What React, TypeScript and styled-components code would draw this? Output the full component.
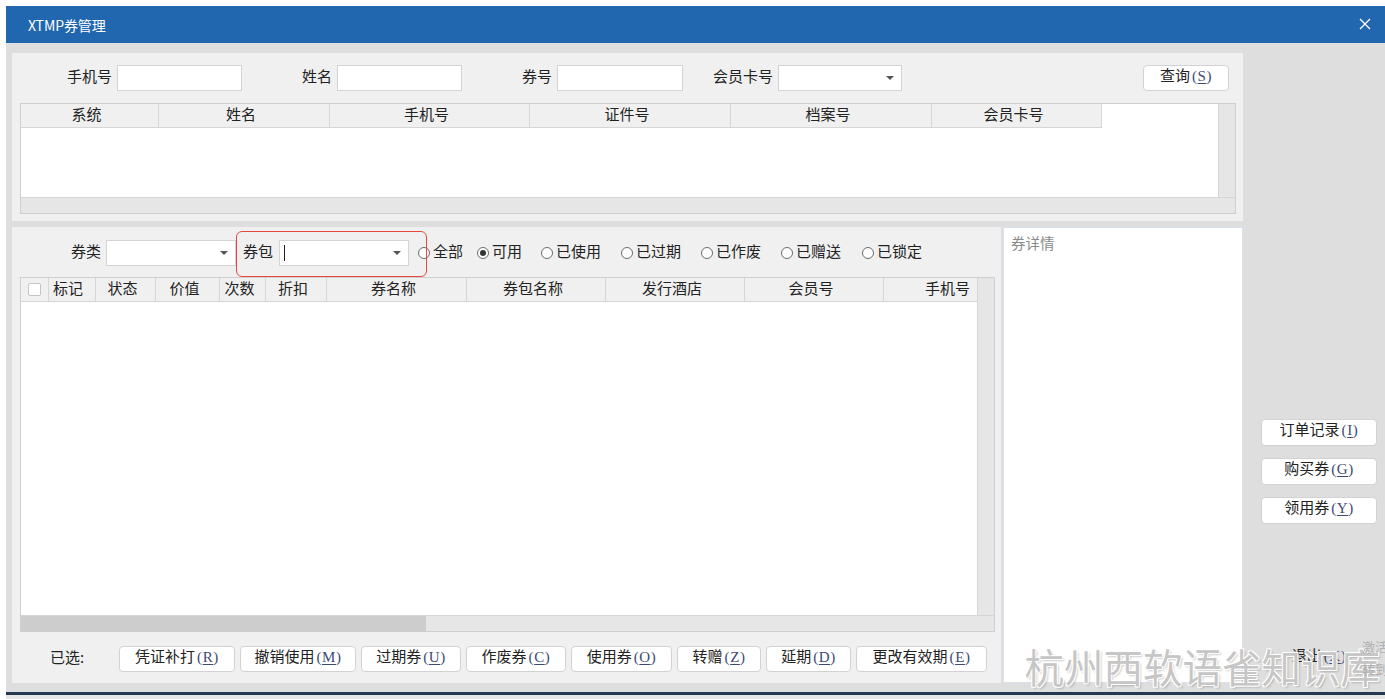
import React from 'react';
import styled, { createGlobalStyle } from 'styled-components';

const GlobalStyle = createGlobalStyle`
  html, body {
    margin: 0;
    padding: 0;
    background: #ffffff;
    overflow: hidden;
  }
  body {
    font-family: "Noto Sans CJK SC", "Microsoft YaHei", sans-serif;
    font-size: 15px;
    color: #222;
  }
  * {
    box-sizing: border-box;
  }
`;

type Column = { title: string; width: number; align?: 'left' | 'center' | 'right' };

const topColumns: Column[] = [
  { title: '系统', width: 138 },
  { title: '姓名', width: 171 },
  { title: '手机号', width: 200 },
  { title: '证件号', width: 201 },
  { title: '档案号', width: 201 },
  { title: '会员卡号', width: 170 },
];

const couponColumns: Column[] = [
  { title: '标记', width: 47, align: 'left' },
  { title: '状态', width: 60 },
  { title: '价值', width: 64 },
  { title: '次数', width: 46 },
  { title: '折扣', width: 61 },
  { title: '券名称', width: 140 },
  { title: '券包名称', width: 139 },
  { title: '发行酒店', width: 139 },
  { title: '会员号', width: 139 },
  { title: '手机号', width: 94, align: 'right' },
];

const statuses = [
  { label: '全部', width: 59 },
  { label: '可用', width: 64, checked: true },
  { label: '已使用', width: 80 },
  { label: '已过期', width: 80 },
  { label: '已作废', width: 80 },
  { label: '已赠送', width: 81 },
  { label: '已锁定', width: 70 },
];

const actions = [
  { text: '凭证补打', key: 'R', width: 116 },
  { text: '撤销使用', key: 'M', width: 116 },
  { text: '过期券', key: 'U', width: 100 },
  { text: '作废券', key: 'C', width: 100 },
  { text: '使用券', key: 'O', width: 101 },
  { text: '转赠', key: 'Z', width: 84 },
  { text: '延期', key: 'D', width: 85 },
  { text: '更改有效期', key: 'E', width: 131 },
];

const sideActions = [
  { text: '订单记录', key: 'I' },
  { text: '购买券', key: 'G' },
  { text: '领用券', key: 'Y' },
];

function Caption({ text, hotkey }: { text: string; hotkey: string }) {
  return (
    <CaptionText>
      {text}
      <Hotkey>
        (<u>{hotkey}</u>)
      </Hotkey>
    </CaptionText>
  );
}

function Select({ width, caret }: { width: number; caret?: boolean }) {
  return (
    <SelectBox $width={width}>
      {caret ? <Caret /> : null}
      <Arrow />
    </SelectBox>
  );
}

export default function App() {
  return (
    <Page>
      <GlobalStyle />
      <Window>
        <TitleBar>
          <Title>XTMP券管理</Title>
          <CloseIcon viewBox="0 0 12 12">
            <path d="M1 1 L11 11 M11 1 L1 11" />
          </CloseIcon>
        </TitleBar>

        <Body>
          <MainCol>
            <SearchPanel>
              <SearchRow>
                <Field $width={222}>
                  <FieldLabel>手机号</FieldLabel>
                  <TextInput $width={125} />
                </Field>
                <Field $width={220}>
                  <FieldLabel>姓名</FieldLabel>
                  <TextInput $width={125} />
                </Field>
                <Field $width={221}>
                  <FieldLabel>券号</FieldLabel>
                  <TextInput $width={126} />
                </Field>
                <Field $width={219}>
                  <FieldLabel>会员卡号</FieldLabel>
                  <Select width={124} />
                </Field>
                <QueryButton>
                  <Caption text="查询" hotkey="S" />
                </QueryButton>
              </SearchRow>

              <Grid>
                <GridView>
                  <HeaderRow>
                    {topColumns.map((c) => (
                      <HeaderCell key={c.title} $width={c.width}>
                        {c.title}
                      </HeaderCell>
                    ))}
                  </HeaderRow>
                </GridView>
                <VScroll />
                <HScroll />
              </Grid>
            </SearchPanel>

            <LowerRow>
              <CouponPanel>
                <FilterRow>
                  <Field $width={216}>
                    <FieldLabel>券类</FieldLabel>
                    <Select width={130} />
                  </Field>
                  <MarkedField>
                    <FieldLabel>券包</FieldLabel>
                    <Select width={130} caret />
                    <Highlight />
                  </MarkedField>
                  {statuses.map((s) => (
                    <RadioItem key={s.label} $width={s.width}>
                      <RadioDot $checked={!!s.checked} />
                      <RadioText>{s.label}</RadioText>
                    </RadioItem>
                  ))}
                </FilterRow>

                <Grid>
                  <GridView>
                    <HeaderRow $fill>
                      <CheckCell>
                        <CheckBox />
                      </CheckCell>
                      {couponColumns.map((c) => (
                        <HeaderCell key={c.title} $width={c.width} $align={c.align}>
                          {c.title}
                        </HeaderCell>
                      ))}
                    </HeaderRow>
                  </GridView>
                  <VScroll />
                  <HScroll>
                    <Thumb />
                  </HScroll>
                </Grid>

                <ActionRow>
                  <SelectedLabel>已选:</SelectedLabel>
                  {actions.map((a) => (
                    <Button key={a.key} $width={a.width}>
                      <Caption text={a.text} hotkey={a.key} />
                    </Button>
                  ))}
                </ActionRow>
              </CouponPanel>

              <DetailPanel>券详情</DetailPanel>
            </LowerRow>
          </MainCol>

          <SideCol>
            {sideActions.map((a) => (
              <SideButton key={a.key}>
                <Caption text={a.text} hotkey={a.key} />
              </SideButton>
            ))}
            <ExitButton>
              <Caption text="退出" hotkey="X" />
            </ExitButton>
          </SideCol>
        </Body>

        <Watermark>杭州西软语雀知识库</Watermark>
      </Window>
      <Activation>
        激活 Windows
        <br />
        转到“设置”以激活
      </Activation>
      <BottomStrip />
    </Page>
  );
}

const Page = styled.div`
  position: relative;
  width: 1385px;
  height: 699px;
  padding: 6px 0 0 6px;
  display: flex;
  flex-direction: column;
`;

const Window = styled.div`
  position: relative;
  height: 686px;
  display: flex;
  flex-direction: column;
  overflow: hidden;
`;

const TitleBar = styled.div`
  height: 37px;
  flex: none;
  display: flex;
  align-items: center;
  justify-content: space-between;
  padding: 0 14px 0 22px;
  background: #2067b0;
  color: #fff;
`;

const Title = styled.span`
  font-size: 14px;
  letter-spacing: -0.1px;
`;

const CloseIcon = styled.svg`
  width: 12px;
  height: 12px;
  margin-top: -2px;
  fill: none;
  stroke: #fff;
  stroke-width: 1.4;
`;

const Body = styled.div`
  flex: 1;
  display: flex;
  background: #dedede;
  padding: 10px 0 9px 6px;
`;

const MainCol = styled.div`
  width: 1231px;
  display: flex;
  flex-direction: column;
  gap: 6px;
`;

const SearchPanel = styled.section`
  height: 168px;
  display: flex;
  flex-direction: column;
  gap: 12px;
  padding: 12px 7px 7px 8px;
  background: #f0f0f0;
`;

const SearchRow = styled.div`
  height: 26px;
  display: flex;
  align-items: center;
`;

const Field = styled.div<{ $width: number }>`
  width: ${(p) => p.$width}px;
  flex: none;
  display: flex;
  align-items: center;
  justify-content: flex-end;
  gap: 5px;
`;

const FieldLabel = styled.span`
  white-space: nowrap;
  line-height: 1;
  padding-bottom: 5px;
`;

const TextInput = styled.div<{ $width: number }>`
  width: ${(p) => p.$width}px;
  height: 26px;
  background: #fff;
  border: 1px solid #d4d4d4;
`;

const SelectBox = styled.div<{ $width: number }>`
  position: relative;
  width: ${(p) => p.$width}px;
  height: 26px;
  display: flex;
  align-items: center;
  justify-content: space-between;
  padding: 0 7px 0 4px;
  background: #fff;
  border: 1px solid #d4d4d4;
`;

const Arrow = styled.span`
  margin-left: auto;
  width: 0;
  height: 0;
  border-left: 4px solid transparent;
  border-right: 4px solid transparent;
  border-top: 4px solid #555;
`;

const Caret = styled.span`
  width: 1px;
  height: 16px;
  background: #222;
`;

const CaptionText = styled.span`
  white-space: nowrap;
`;

const Hotkey = styled.span`
  font-family: "Liberation Serif", "DejaVu Serif", serif;
  font-size: 15px;
  letter-spacing: 0.6px;
  color: #3d4a74;
  margin-left: 2px;
  u {
    text-underline-offset: 2px;
  }
`;

const Button = styled.button<{ $width?: number }>`
  width: ${(p) => (p.$width ? `${p.$width}px` : 'auto')};
  height: 26px;
  flex: none;
  display: flex;
  align-items: center;
  justify-content: center;
  padding: 0 0 6px;
  background: #fff;
  border: 1px solid #d2d2d2;
  border-radius: 4px;
  font-family: inherit;
  font-size: 15px;
  line-height: 1;
  color: #222;
  white-space: nowrap;
`;

const QueryButton = styled(Button)`
  width: 86px;
  margin-left: auto;
  margin-right: 7px;
`;

const Grid = styled.div`
  flex: 1;
  display: grid;
  grid-template-columns: 1fr 17px;
  grid-template-rows: 1fr 16px;
  background: #fff;
  border: 1px solid #cfcfcf;
`;

const GridView = styled.div`
  overflow: hidden;
`;

const HeaderRow = styled.div<{ $fill?: boolean }>`
  display: flex;
  height: 24px;
  width: ${(p) => (p.$fill ? '100%' : 'auto')};
`;

const HeaderCell = styled.div<{ $width: number; $align?: 'left' | 'center' | 'right' }>`
  width: ${(p) => p.$width}px;
  flex: none;
  height: 24px;
  line-height: 19px;
  padding: ${(p) => (p.$align === 'left' ? '0 0 0 4px' : p.$align === 'right' ? '0 7px 0 0' : '0 6px 0 0')};
  text-align: ${(p) => p.$align ?? 'center'};
  background: #f0f0f0;
  border-right: 1px solid #d6d6d6;
  border-bottom: 1px solid #d6d6d6;
  white-space: nowrap;
`;

const CheckCell = styled.div`
  width: 28px;
  flex: none;
  height: 24px;
  display: flex;
  align-items: center;
  justify-content: center;
  background: #f0f0f0;
  border-right: 1px solid #d6d6d6;
  border-bottom: 1px solid #d6d6d6;
`;

const CheckBox = styled.span`
  width: 13px;
  height: 13px;
  background: #fff;
  border: 1px solid #c4c4c4;
  border-radius: 2px;
`;

const VScroll = styled.div`
  background: #e6e6e6;
  border-left: 1px solid #d6d6d6;
`;

const HScroll = styled.div`
  grid-column: 1 / 3;
  background: #e6e6e6;
  border-top: 1px solid #d6d6d6;
`;

const Thumb = styled.div`
  width: 405px;
  height: 100%;
  background: #cdcdcd;
`;

const LowerRow = styled.div`
  flex: 1;
  display: flex;
  gap: 2px;
`;

const CouponPanel = styled.section`
  width: 989px;
  display: flex;
  flex-direction: column;
  padding: 4px 6px 11px 8px;
  background: #f0f0f0;
`;

const FilterRow = styled.div`
  height: 46px;
  flex: none;
  display: flex;
  align-items: center;
  padding-bottom: 3px;
`;

const MarkedField = styled.div`
  position: relative;
  width: 182px;
  height: 100%;
  flex: none;
  display: flex;
  align-items: center;
  gap: 6px;
  padding-left: 7px;
`;

const Highlight = styled.span`
  position: absolute;
  top: 0;
  bottom: -3px;
  left: 0;
  right: -9px;
  border: 1.5px solid #e5493d;
  border-radius: 6px;
  pointer-events: none;
`;

const RadioItem = styled.label<{ $width: number }>`
  width: ${(p) => p.$width}px;
  flex: none;
  display: flex;
  align-items: center;
  gap: 3px;
  white-space: nowrap;
`;

const RadioText = styled.span`
  line-height: 1;
  padding-bottom: 4px;
`;

const RadioDot = styled.span<{ $checked: boolean }>`
  width: 12px;
  height: 12px;
  flex: none;
  border-radius: 50%;
  border: 1px solid #6a6a6a;
  background: #fff;
  display: flex;
  align-items: center;
  justify-content: center;
  &::after {
    content: '';
    width: 6px;
    height: 6px;
    border-radius: 50%;
    background: ${(p) => (p.$checked ? '#333' : 'transparent')};
  }
`;

const ActionRow = styled.div`
  height: 26px;
  margin-top: 14px;
  flex: none;
  display: flex;
  align-items: center;
  gap: 5px;
  padding-left: 30px;
`;

const SelectedLabel = styled.span`
  width: 38px;
  margin-right: 26px;
  line-height: 1;
  padding-bottom: 6px;
  white-space: nowrap;
`;

const DetailPanel = styled.section`
  flex: 1;
  padding: 4px 7px;
  background: #fff;
  border: 1px solid #d8e1ec;
  color: #8a8a8a;
  font-size: 14.5px;
`;

const SideCol = styled.div`
  flex: 1;
  display: flex;
  flex-direction: column;
  gap: 12px;
  padding: 366px 0 0 18px;
`;

const SideButton = styled(Button)`
  width: 116px;
  height: 27px;
`;

const ExitButton = styled(Button)`
  width: 116px;
  margin-top: auto;
  margin-bottom: 12px;
  background: transparent;
  border-color: transparent;
`;

const Watermark = styled.div`
  position: absolute;
  right: 5px;
  bottom: -2px;
  font-size: 39.5px;
  color: #c6c6c6;
  text-shadow: 1px 1px 0 #fff, -1px -1px 0 #fff, 1px -1px 0 #fff, -1px 1px 0 #fff, 2px 2px 2px rgba(0, 0, 0, 0.2);
  white-space: nowrap;
  pointer-events: none;
`;

const Activation = styled.div`
  position: absolute;
  left: 1362px;
  top: 636px;
  font-size: 13px;
  line-height: 22px;
  color: #b0b0b0;
  white-space: nowrap;
  pointer-events: none;
`;

const BottomStrip = styled.div`
  flex: 1;
  border-top: 3px solid #243850;
  background: #e6e6e6;
`;
